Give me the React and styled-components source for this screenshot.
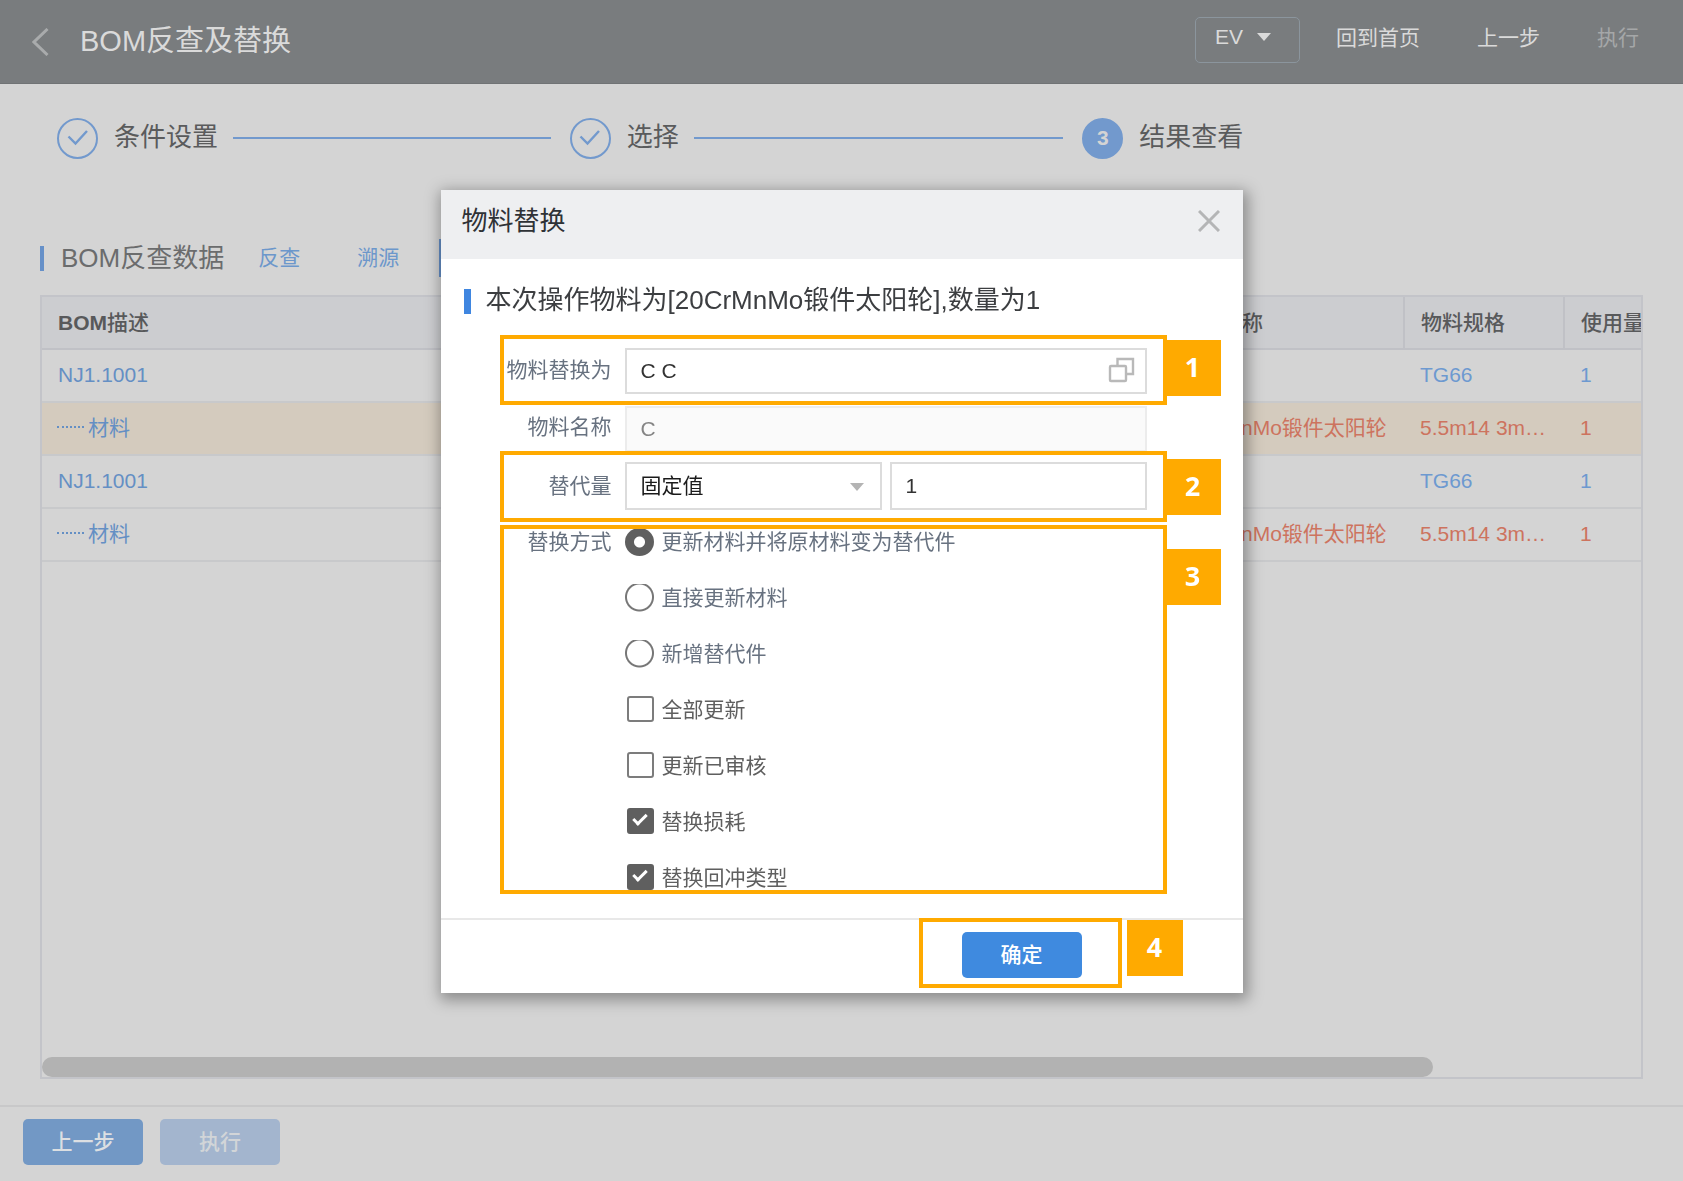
import React from "react";
import styled, { createGlobalStyle, css } from "styled-components";

const ORANGE = "#ffaa00";

const GlobalStyle = createGlobalStyle`
  *, *::before, *::after { box-sizing: border-box; }
  body { margin: 0; background: #d4d4d4; }
  body, button, input, select {
    font-family: "Liberation Sans", "Noto Sans CJK SC", sans-serif;
    font-size: 21px;
    line-height: 30px;
  }
  button { border: 0; background: none; padding: 0; cursor: pointer; }
`;

const Page = styled.div`
  display: flex;
  flex-direction: column;
  min-height: 100vh;
`;

const TopBar = styled.header`
  display: flex;
  align-items: center;
  height: 84px;
  padding: 0 44px 0 32px;
  background: #797c7e;
  border-bottom: 1px solid #707375;
`;

const BackButton = styled.button`
  width: 17px;
  height: 28px;
  margin-right: 31px;
  svg { display: block; }
`;

const PageTitle = styled.h1`
  flex: 1;
  margin: 0;
  padding-bottom: 2px;
  font-size: 29px;
  font-weight: 400;
  line-height: 40px;
  color: #dadada;
`;

const OrgButton = styled.button`
  display: flex;
  align-items: center;
  gap: 14px;
  width: 105px;
  height: 46px;
  margin: 0 36px 3px 0;
  padding: 0 0 6px 19px;
  border: 1px solid #8b959d;
  border-radius: 5px;
  color: #dadada;
`;

const NavLinks = styled.nav`
  display: flex;
  gap: 57px;
  padding-bottom: 8px;
`;

const NavButton = styled.button`
  color: ${(p) => (p.disabled ? "#a5a7a8" : "#dadada")};
`;

const Steps = styled.ol`
  display: flex;
  list-style: none;
  margin: 0;
  padding: 33px 88px 0 57px;
`;

const Step = styled.li`
  flex: 1;
  display: flex;
  align-items: center;
  height: 42px;
`;

const StepMark = styled.span`
  display: flex;
  align-items: center;
  justify-content: center;
  width: 41px;
  height: 41px;
  margin-right: 16px;
  border: 2px solid #7299cd;
  border-radius: 50%;
  font-weight: 700;
  color: #d4d4d4;
  background: ${(p) => (p.$current ? "#7299cd" : "transparent")};
`;

const StepName = styled.span`
  padding-bottom: 3px;
  font-size: 26px;
  line-height: 36px;
  color: #5a5b5c;
`;

const StepLine = styled.span`
  flex: 1;
  height: 2px;
  margin: 0 19px 0 15px;
  background: #7299cd;
`;

const Section = styled.section`
  flex: 1;
  display: flex;
  flex-direction: column;
  padding: 80px 40px 26px;
`;

const SectionHead = styled.div`
  display: flex;
  align-items: center;
  height: 38px;
  margin-bottom: 18px;
`;

const Marker = styled.span`
  flex: none;
  width: ${(p) => p.$width}px;
  height: 25px;
  margin-right: ${(p) => p.$gap}px;
  background: ${(p) => p.$color};
`;

const SectionTitle = styled.h2`
  margin: 0 34px 0 0;
  font-size: 26px;
  font-weight: 400;
  line-height: 36px;
  color: #6b6c6d;
`;

const TabButton = styled.button`
  height: 38px;
  margin-right: 57px;
  color: #6c97cb;
`;

const ActiveTab = styled.span`
  width: 98px;
  height: 38px;
  margin-left: -17px;
  border: 2px solid #6690c8;
`;

const TableBox = styled.div`
  flex: 1;
  display: flex;
  flex-direction: column;
  overflow: hidden;
  border: 2px solid #c3c4c9;
`;

const Table = styled.table`
  width: 1842px;
  table-layout: fixed;
  border-collapse: collapse;
`;

const Th = styled.th`
  height: 52px;
  padding: 0 16px;
  text-align: left;
  font-weight: 500;
  color: #58595b;
  background: #cccdd0;
  border-bottom: 2px solid #c0c1c6;
  border-right: 2px solid #c0c1c6;
`;

const Tr = styled.tr`
  background: ${(p) => (p.$selected ? "#d4cbbe" : "transparent")};
`;

const toneColors = { blue: "#6d99d0", red: "#cd735e", link: "#648fc4" };

const Td = styled.td`
  height: 53px;
  padding: 0 16px 2px;
  color: ${(p) => toneColors[p.$tone]};
  border-bottom: 2px solid #c8c9cb;
  white-space: nowrap;
  overflow: hidden;
  text-overflow: ellipsis;
`;

const Branch = styled.span`
  display: inline-block;
  width: 27px;
  margin: 0 4px 0 -1px;
  border-top: 2px dotted #648fc4;
  vertical-align: 7px;
`;

const Scrollbar = styled.div`
  width: 87%;
  height: 20px;
  margin-top: auto;
  border-radius: 10px;
  background: #b2b2b2;
`;

const BottomBar = styled.footer`
  display: flex;
  gap: 17px;
  height: 76px;
  padding: 12px 23px;
  border-top: 2px solid #c8c8c9;
`;

const SolidButton = styled.button`
  width: 120px;
  height: 46px;
  padding-bottom: 1px;
  border-radius: 5px;
  font-weight: 500;
  color: ${(p) => p.$ink};
  background: ${(p) => p.$fill};
`;

const ModalLayer = styled.div`
  position: fixed;
  inset: 0;
  display: flex;
  align-items: center;
  justify-content: center;
  padding-top: 2px;
`;

const Modal = styled.div`
  width: 802px;
  background: #fff;
  box-shadow: 2px 4px 14px 3px rgba(0, 0, 0, 0.34);
`;

const ModalHead = styled.div`
  display: flex;
  align-items: center;
  justify-content: space-between;
  height: 69px;
  padding: 0 23px 7px 21px;
  background: #eeeff1;
`;

const ModalTitle = styled.h2`
  margin: 0;
  font-size: 26px;
  font-weight: 400;
  line-height: 36px;
  color: #2f3236;
`;

const CloseButton = styled.button`
  width: 22px;
  height: 22px;
  svg { display: block; }
`;

const Summary = styled.div`
  display: flex;
  align-items: center;
  height: 76px;
  padding: 8px 23px 0;
  p {
    margin: 0;
    padding-bottom: 3px;
    font-size: 26px;
    line-height: 36px;
    color: #3c3e41;
  }
`;

const Group = styled.div`
  position: relative;
  display: flex;
  gap: 13px;
  margin: 0 76px ${(p) => p.$after || 0}px 59px;
  padding: ${(p) => p.$pad} 20px 0 5px;
  height: ${(p) => p.$height}px;
  ${(p) =>
    p.$callout &&
    css`
      &::after {
        content: "";
        position: absolute;
        inset: 0;
        border: 4px solid ${ORANGE};
        pointer-events: none;
      }
    `}
`;

const Badge = styled.span`
  position: absolute;
  z-index: 1;
  left: calc(100% + ${(p) => p.$gap}px);
  top: ${(p) => p.$top}px;
  width: 56px;
  height: 56px;
  font-family: "Open Sans", "Noto Sans", sans-serif;
  font-size: 27px;
  font-weight: 700;
  line-height: 54px;
  text-align: center;
  color: #fff;
  background: ${ORANGE};
`;

const labelText = css`
  width: 107px;
  text-align: right;
  white-space: nowrap;
  color: #687280;
`;

const FieldLabel = styled.label`
  ${labelText}
  line-height: ${(p) => p.$line}px;
`;

const GroupLabel = styled.span`
  ${labelText}
  line-height: 28px;
`;

const FieldBox = styled.div`
  position: relative;
  flex: 1;
`;

const controlStyle = css`
  display: block;
  width: 100%;
  height: ${(p) => p.$height}px;
  padding: 0 14px;
  border: 2px solid #dcdcdc;
  border-radius: 0;
  outline: 0;
  appearance: none;
`;

const TextInput = styled.input`
  ${controlStyle}
  color: #333;
  background: #fff;
  &:disabled {
    color: #858585;
    background: #fafafa;
    border-color: #ececec;
  }
`;

const SelectInput = styled.select`
  ${controlStyle}
  color: #1a1a1a;
  background: #fff;
`;

const SelectArrow = styled.svg`
  position: absolute;
  right: 18px;
  top: 21px;
  pointer-events: none;
`;

const PickButton = styled.button`
  position: absolute;
  right: 12px;
  top: 9px;
  svg { display: block; }
`;

const Pair = styled.div`
  flex: 1;
  display: grid;
  grid-template-columns: 1fr 1fr;
  gap: 8px;
`;

const Options = styled.div`
  display: flex;
  flex-direction: column;
  gap: 28px;
`;

const Option = styled.label`
  display: flex;
  align-items: center;
  gap: 8px;
  height: 28px;
  color: ${(p) => (p.$muted ? "#687280" : "#5f5f5f")};
`;

const Radio = styled.input`
  appearance: none;
  width: 29px;
  height: 28px;
  margin: 0;
  background: radial-gradient(circle at 50% 13px, transparent 12px, #777 13px, #777 14px, transparent 15px);
  &:checked {
    border-radius: 50%;
    background: radial-gradient(circle at 50% 50%, #fff 5px, #5f5f5f 6px);
  }
`;

const Check = styled.input`
  appearance: none;
  position: relative;
  width: 27px;
  height: 26px;
  margin: 0 0 2px 2px;
  border: 2px solid #7c7c7c;
  border-radius: 3px;
  &:checked {
    border-color: #5f5f5f;
    background: #5f5f5f;
  }
  &:checked::after {
    content: "";
    position: absolute;
    left: 7px;
    top: 1px;
    width: 8px;
    height: 14px;
    border: solid #fff;
    border-width: 0 3px 3px 0;
    transform: rotate(45deg);
  }
`;

const ModalFoot = styled.div`
  display: flex;
  justify-content: flex-end;
  align-items: flex-start;
  height: 75px;
  padding-right: 121px;
  box-shadow: inset 0 2px 0 #e8e8e8;
`;

const ConfirmArea = styled.div`
  position: relative;
  width: 203px;
  height: 70px;
  padding: 10px 0 0 39px;
  border: 4px solid ${ORANGE};
`;

const rows = [
  { code: "NJ1.1001", spec: "TG66", qty: "1" },
  { child: "材料", name: "20CrMnMo锻件太阳轮", spec: "5.5m14 3m…", qty: "1", selected: true },
  { code: "NJ1.1001", spec: "TG66", qty: "1" },
  { child: "材料", name: "20CrMnMo锻件太阳轮", spec: "5.5m14 3m…", qty: "1" },
];

const radios = ["更新材料并将原材料变为替代件", "直接更新材料", "新增替代件"];

const checks = [
  { text: "全部更新", on: false },
  { text: "更新已审核", on: false },
  { text: "替换损耗", on: true },
  { text: "替换回冲类型", on: true },
];

const Tick = () => (
  <svg width="22" height="20" viewBox="0 0 22 20" fill="none" stroke="#7299cd" strokeWidth="2.4">
    <path d="M1.500 8.500l7 7L20 3" />
  </svg>
);

function StepItem({ name, number, done, last }) {
  return (
    <Step>
      <StepMark $current={!done}>{done ? <Tick /> : number}</StepMark>
      <StepName>{name}</StepName>
      {!last && <StepLine />}
    </Step>
  );
}

function ReplaceDialog() {
  return (
    <ModalLayer>
      <Modal role="dialog" aria-labelledby="dialog-title">
        <ModalHead>
          <ModalTitle id="dialog-title">物料替换</ModalTitle>
          <CloseButton aria-label="关闭">
            <svg width="22" height="22" viewBox="0 0 22 22" stroke="#b4b5b6" strokeWidth="3">
              <path d="M1 1l20 20M21 1L1 21" />
            </svg>
          </CloseButton>
        </ModalHead>
        <Summary>
          <Marker $width={7} $gap={15} $color="#3f86e0" />
          <p>本次操作物料为[20CrMnMo锻件太阳轮],数量为1</p>
        </Summary>
        <Group $callout $height={70} $pad="13px">
          <FieldLabel htmlFor="target" $line={44}>物料替换为</FieldLabel>
          <FieldBox>
            <TextInput id="target" $height={46} defaultValue="C C" />
            <PickButton aria-label="选择物料">
              <svg width="27" height="26" viewBox="0 0 27 26" fill="none" stroke="#b9b9b9" strokeWidth="2.400">
                <path d="M9.500 8V2h15.500v15h-7" />
                <rect x="2" y="9" width="16" height="15" rx="1" />
              </svg>
            </PickButton>
          </FieldBox>
          <Badge $gap={-2} $top={5}>1</Badge>
        </Group>
        <Group $height={46} $pad="1px">
          <FieldLabel htmlFor="name" $line={42}>物料名称</FieldLabel>
          <FieldBox>
            <TextInput id="name" $height={46} defaultValue="C" disabled />
          </FieldBox>
        </Group>
        <Group $callout $height={71} $pad="11px" $after={3}>
          <FieldLabel htmlFor="mode" $line={48}>替代量</FieldLabel>
          <Pair>
            <FieldBox>
              <SelectInput id="mode" $height={48}>
                <option>固定值</option>
              </SelectInput>
              <SelectArrow width="14" height="8" viewBox="0 0 14 8" fill="#b4b4b4">
                <path d="M0 0h14L7 8z" />
              </SelectArrow>
            </FieldBox>
            <FieldBox>
              <TextInput aria-label="替代量数值" $height={48} defaultValue="1" />
            </FieldBox>
          </Pair>
          <Badge $gap={-2} $top={8}>2</Badge>
        </Group>
        <Group $callout $height={369} $pad="3px" $after={24}>
          <GroupLabel id="method">替换方式</GroupLabel>
          <Options role="group" aria-labelledby="method">
            {radios.map((text, i) => (
              <Option key={text} $muted>
                <Radio type="radio" name="method" defaultChecked={i === 0} />
                {text}
              </Option>
            ))}
            {checks.map((c) => (
              <Option key={c.text}>
                <Check type="checkbox" defaultChecked={c.on} />
                {c.text}
              </Option>
            ))}
          </Options>
          <Badge $gap={-2} $top={24}>3</Badge>
        </Group>
        <ModalFoot>
          <ConfirmArea>
            <SolidButton $fill="#3f8adf" $ink="#fff">确定</SolidButton>
            <Badge $gap={9} $top={-2}>4</Badge>
          </ConfirmArea>
        </ModalFoot>
      </Modal>
    </ModalLayer>
  );
}

export default function App() {
  return (
    <>
      <GlobalStyle />
      <Page>
        <TopBar>
          <BackButton aria-label="返回">
            <svg width="17" height="28" viewBox="0 0 17 28" fill="none" stroke="#a9abac" strokeWidth="3">
              <path d="M15.500 1L2 14l13.500 13" />
            </svg>
          </BackButton>
          <PageTitle>BOM反查及替换</PageTitle>
          <OrgButton>
            EV
            <svg width="14" height="8" viewBox="0 0 14 8" fill="#dadada">
              <path d="M0 0h14L7 8z" />
            </svg>
          </OrgButton>
          <NavLinks>
            <NavButton>回到首页</NavButton>
            <NavButton>上一步</NavButton>
            <NavButton disabled>执行</NavButton>
          </NavLinks>
        </TopBar>
        <Steps>
          <StepItem name="条件设置" done />
          <StepItem name="选择" done />
          <StepItem name="结果查看" number={3} last />
        </Steps>
        <Section>
          <SectionHead>
            <Marker $width={4} $gap={17} $color="#6690c8" />
            <SectionTitle>BOM反查数据</SectionTitle>
            <TabButton>反查</TabButton>
            <TabButton>溯源</TabButton>
            <ActiveTab />
          </SectionHead>
          <TableBox>
            <Table>
              <colgroup>
                <col style={{ width: 1120 }} />
                <col style={{ width: 242 }} />
                <col style={{ width: 160 }} />
                <col />
              </colgroup>
              <thead>
                <tr>
                  <Th><b>BOM</b>描述</Th>
                  <Th>物料名称</Th>
                  <Th>物料规格</Th>
                  <Th>使用量</Th>
                </tr>
              </thead>
              <tbody>
                {rows.map((row, i) => {
                  const tone = row.child ? "red" : "blue";
                  return (
                    <Tr key={i} $selected={row.selected}>
                      <Td $tone="link">
                        {row.child ? <><Branch />{row.child}</> : row.code}
                      </Td>
                      <Td $tone={tone}>{row.name}</Td>
                      <Td $tone={tone}>{row.spec}</Td>
                      <Td $tone={tone}>{row.qty}</Td>
                    </Tr>
                  );
                })}
              </tbody>
            </Table>
            <Scrollbar />
          </TableBox>
        </Section>
        <BottomBar>
          <SolidButton $fill="#7298c5" $ink="#dcdfe2">上一步</SolidButton>
          <SolidButton $fill="#a3b5ce" $ink="#d2d5d8" disabled>执行</SolidButton>
        </BottomBar>
      </Page>
      <ReplaceDialog />
    </>
  );
}
